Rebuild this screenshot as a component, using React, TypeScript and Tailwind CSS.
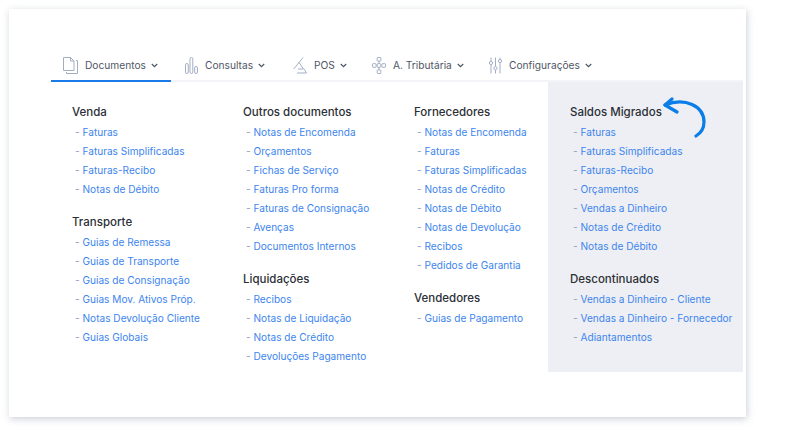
import React from 'react';

const columns = [
  [
    { title: 'Venda', links: ['Faturas', 'Faturas Simplificadas', 'Faturas-Recibo', 'Notas de Débito'] },
    { title: 'Transporte', links: ['Guias de Remessa', 'Guias de Transporte', 'Guias de Consignação', 'Guias Mov. Ativos Próp.', 'Notas Devolução Cliente', 'Guias Globais'] },
  ],
  [
    { title: 'Outros documentos', links: ['Notas de Encomenda', 'Orçamentos', 'Fichas de Serviço', 'Faturas Pro forma', 'Faturas de Consignação', 'Avenças', 'Documentos Internos'] },
    { title: 'Liquidações', links: ['Recibos', 'Notas de Liquidação', 'Notas de Crédito', 'Devoluções Pagamento'] },
  ],
  [
    { title: 'Fornecedores', links: ['Notas de Encomenda', 'Faturas', 'Faturas Simplificadas', 'Notas de Crédito', 'Notas de Débito', 'Notas de Devolução', 'Recibos', 'Pedidos de Garantia'] },
    { title: 'Vendedores', links: ['Guias de Pagamento'] },
  ],
];

const migrated = [
  { title: 'Saldos Migrados', links: ['Faturas', 'Faturas Simplificadas', 'Faturas-Recibo', 'Orçamentos', 'Vendas a Dinheiro', 'Notas de Crédito', 'Notas de Débito'] },
  { title: 'Descontinuados', links: ['Vendas a Dinheiro - Cliente', 'Vendas a Dinheiro - Fornecedor', 'Adiantamentos'] },
];

const DocIcon = () => (
  <svg className="shrink-0" width="15" height="17" viewBox="0 0 15 17" fill="none" stroke="#a3aec4" strokeWidth="1">
    <path d="M.5 .5h7l3.500 3.500v9.500h-10.500z" />
    <path d="M7.500 .5v3.500h3.500" />
    <path d="M13 3.500h1.500v13h-11v-1.500" />
  </svg>
);

const ChartIcon = () => (
  <svg className="shrink-0" width="13" height="17" viewBox="0 0 13 17" fill="none" stroke="#a3aec4" strokeWidth="1">
    <rect x=".5" y="6.500" width="2.800" height="10" rx="1.400" />
    <rect x="5" y=".5" width="2.800" height="16" rx="1.400" />
    <rect x="9.700" y="9.500" width="2.800" height="7" rx="1.400" />
  </svg>
);

const PosIcon = () => (
  <svg className="shrink-0" width="14" height="17" viewBox="0 0 14 17" fill="none" stroke="#a3aec4" strokeWidth="1">
    <path d="M10 .5L.8 12" />
    <path d="M6 5.500l4.500 6.500" />
    <path d="M5 12h5.500" />
    <path d="M4 16h9.500l-2.500-4" />
  </svg>
);

const TreeIcon = () => (
  <svg className="shrink-0" width="14" height="17" viewBox="0 0 14 17" fill="none" stroke="#a3aec4" strokeWidth="1">
    <rect x="5.200" y=".5" width="3.600" height="3.600" rx=".6" />
    <rect x=".5" y="6.700" width="3.600" height="3.600" rx=".6" />
    <rect x="5.200" y="6.700" width="3.600" height="3.600" rx=".6" />
    <rect x="9.900" y="6.700" width="3.600" height="3.600" rx=".6" />
    <rect x="5.200" y="12.900" width="3.600" height="3.600" rx=".6" />
    <path d="M7 4.100v2.600M7 10.300v2.600" />
  </svg>
);

const SlidersIcon = () => (
  <svg className="shrink-0" width="13" height="17" viewBox="0 0 13 17" fill="none" stroke="#a3aec4" strokeWidth="1">
    <path d="M2 .5v3.500M2 8v8.500M6.500 .5v9M6.500 13v3.500M11 .5v1.500M11 6v10.500" />
    <circle cx="2" cy="6" r="1.600" />
    <circle cx="6.500" cy="11.200" r="1.600" />
    <circle cx="11" cy="4" r="1.600" />
  </svg>
);

const Chevron = () => (
  <svg className="shrink-0" width="7" height="5" viewBox="0 0 7 5" fill="none" stroke="#4b5563" strokeWidth="1.200">
    <path d="M.8 1l2.700 2.600L6.200 1" />
  </svg>
);

const tabs = [
  { label: 'Documentos', icon: <DocIcon />, active: true, width: 'w-[120px]', pad: 'pl-3' },
  { label: 'Consultas', icon: <ChartIcon />, active: false, width: 'w-[108px]', pad: 'pl-3.5' },
  { label: 'POS', icon: <PosIcon />, active: false, width: 'w-[79px]', pad: 'pl-3.5' },
  { label: 'A. Tributária', icon: <TreeIcon />, active: false, width: 'w-[117px]', pad: 'pl-3.5' },
  { label: 'Configurações', icon: <SlidersIcon />, active: false, width: 'w-[116px]', pad: 'pl-3.5' },
];

const Group = ({ title, links, className }: { title: string; links: string[]; className?: string }) => (
  <div className={className}>
    <h3 className="h-[19px] text-[11.5px] leading-[21px] font-medium text-[#2b2f36]">{title}</h3>
    <ul className="mt-[2.5px]">
      {links.map((link) => (
        <li key={link} className="flex h-[18.9px] items-center pl-[3px] text-[10.1px] whitespace-nowrap">
          <span className="w-[7.5px] text-[#8fa0bd]">-</span>
          <span className="text-[#3d85ee]">{link}</span>
        </li>
      ))}
    </ul>
  </div>
);

const App = () => {
  return (
    <div className="h-[432px] w-[800px] overflow-hidden bg-white pt-[9px] pl-[9px] font-['Inter',sans-serif]">
      <div className="h-[408px] w-[737px] bg-white pt-[39px] pl-[42px] shadow-[1px_2px_7px_rgba(90,100,125,0.3)]">
        <nav className="flex h-[34px] w-[692px] border-b-2 border-[#f3f4f8]">
          {tabs.map((tab) => (
            <div
              key={tab.label}
              className={`flex h-[34px] shrink-0 items-center border-b-2 pt-[2px] ${tab.width} ${tab.pad} ${tab.active ? 'border-[#1a7ae8]' : 'border-transparent'}`}
            >
              {tab.icon}
              <span className="mr-[5px] ml-[7px] pt-[1px] text-[10.2px] whitespace-nowrap text-[#4f5666]">{tab.label}</span>
              <Chevron />
            </div>
          ))}
        </nav>
        <div className="flex w-[692px]">
          <div className="flex h-[290px] pt-[20px]">
            {columns.map((col, i) => (
              <div key={i} className="w-[171px] pl-[21px]">
                <Group title={col[0].title} links={col[0].links} />
                <Group title={col[1].title} links={col[1].links} className="mt-[13px]" />
              </div>
            ))}
          </div>
          <div className="relative ml-[-16px] h-[290px] w-[195px] bg-[#eeeff4] pt-[20px] pl-[22px]">
            <Group title={migrated[0].title} links={migrated[0].links} />
            <Group title={migrated[1].title} links={migrated[1].links} className="mt-[13px]" />
            <svg className="absolute top-[15px] left-[115px]" width="44" height="42" viewBox="0 0 44 42" fill="none" stroke="#0a7de8" strokeWidth="3.200" strokeLinecap="round" strokeLinejoin="round">
              <path d="M2 8C22 0 41 9 41 25c0 6-3 11-8 14" />
              <path d="M9 2L2 8l12 7" />
            </svg>
          </div>
        </div>
      </div>
    </div>
  );
};

export default App;
